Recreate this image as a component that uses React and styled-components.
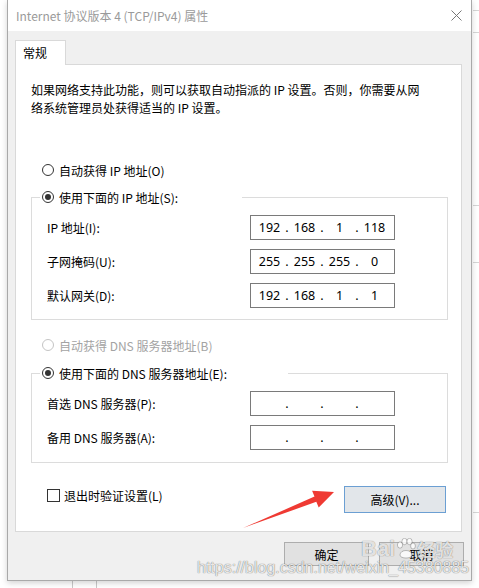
import React from 'react';
import styled, {createGlobalStyle} from 'styled-components';

const GlobalStyle = createGlobalStyle`
  html, body {
    margin: 0;
    padding: 0;
  }
  body {
    font-family: "Noto Sans CJK SC", "Noto Sans", sans-serif;
    font-size: 12px;
    color: #000;
  }
`;

const Desktop = styled.div`
  position: relative;
  width: 479px;
  height: 588px;
  overflow: hidden;
  background-color: #fff;
  background-image:
    linear-gradient(#c9c9c9, #c9c9c9),
    linear-gradient(#c9c9c9, #c9c9c9),
    linear-gradient(#d6d6d6, #d6d6d6),
    linear-gradient(#d6d6d6, #d6d6d6),
    linear-gradient(#d6d6d6, #d6d6d6),
    linear-gradient(#d6d6d6, #d6d6d6),
    linear-gradient(#d6d6d6, #d6d6d6);
  background-repeat: no-repeat;
  background-size: 1px 8px, 1px 8px, 7px 1px, 7px 1px, 7px 1px, 7px 1px, 7px 1px;
  background-position: 72px 581px, 96px 581px, 473px 10px, 473px 32px, 473px 205px, 473px 262px, 473px 512px;
`;

const Window = styled.div`
  box-sizing: border-box;
  width: 465px;
  height: 581px;
  margin-left: 7px;
  background: #f0f0f0;
  border: 1px solid #a9a9a9;
  border-top: none;
  box-shadow: 0 2px 6px rgba(0, 0, 0, 0.18);
  display: flex;
  flex-direction: column;
`;

const TitleBar = styled.div`
  height: 31px;
  background: #fff;
  display: flex;
  align-items: center;
  padding: 0 9px 0 8px;
`;

const Title = styled.span`
  color: #9a9a9a;
  font-size: 12px;
`;

const Close = styled.svg`
  margin-left: auto;
  width: 11px;
  height: 11px;
`;

const Body = styled.div`
  flex: 1;
  padding: 9px 7px 0 7px;
  display: flex;
  flex-direction: column;
`;

const Tab = styled.div`
  box-sizing: border-box;
  width: 51px;
  height: 25px;
  padding-left: 7px;
  line-height: 23px;
  background: #fff;
  border: 1px solid #d9d9d9;
  border-bottom: none;
  margin-bottom: -1px;
  position: relative;
  z-index: 1;
`;

const Panel = styled.div`
  box-sizing: border-box;
  width: 447px;
  height: 468px;
  background: #fff;
  border: 1px solid #d9d9d9;
  padding: 16px 13px 0 15px;
`;

const Intro = styled.p`
  margin: 0;
  line-height: 18px;
`;

const RadioRow = styled.label`
  display: flex;
  align-items: center;
  height: 18px;
  gap: 5px;
  padding-left: ${p => p.$indent}px;
  margin-top: ${p => p.$top || 0}px;
  color: ${p => (p.$disabled ? '#a3a3a3' : '#000')};
`;

const Circle = styled.span`
  box-sizing: border-box;
  width: 12px;
  height: 12px;
  border-radius: 50%;
  border: 1px solid ${p => (p.$disabled ? '#c4c4c4' : '#333')};
  background: #fff;
  display: flex;
  align-items: center;
  justify-content: center;
  &::after {
    content: '';
    display: ${p => (p.$checked ? 'block' : 'none')};
    width: 6px;
    height: 6px;
    border-radius: 50%;
    background: #333;
  }
`;

const Group = styled.fieldset`
  box-sizing: border-box;
  width: 417px;
  margin: ${p => p.$top}px 0 0 0;
  padding: 0;
  min-width: 0;
  border: 1px solid #dcdcdc;
`;

const Legend = styled.legend`
  padding: 0;
  margin-left: 8px;
  width: ${p => p.$width}px;
`;

const Fields = styled.div`
  display: grid;
  grid-template-columns: 203px 145px;
  row-gap: 9px;
  align-items: center;
  padding: 9px 0 ${p => p.$bottom}px 15px;
`;

const IpBox = styled.div`
  box-sizing: border-box;
  height: 25px;
  border: 1px solid #7a7a7a;
  background: #fff;
  display: flex;
  align-items: center;
  padding-left: 3px;
  font-family: "Noto Sans", sans-serif;
  font-size: 12.5px;
`;

const Octet = styled.span`
  width: 31px;
  text-align: center;
`;

const Dot = styled.span`
  width: 4px;
  text-align: center;
`;

const BottomRow = styled.div`
  display: flex;
  justify-content: space-between;
  align-items: flex-start;
  margin-top: 23px;
  padding: 0 2px 0 16px;
`;

const Check = styled.label`
  display: flex;
  align-items: center;
  height: 18px;
  gap: 4px;
`;

const Box = styled.span`
  box-sizing: border-box;
  width: 13px;
  height: 13px;
  border: 1px solid #333;
  background: #fff;
`;

const Button = styled.button`
  box-sizing: border-box;
  width: ${p => p.$w}px;
  height: ${p => p.$h}px;
  font-family: "Noto Sans CJK SC", "Noto Sans", sans-serif;
  font-size: 12px;
  color: #000;
  padding: 0;
  background: ${p => (p.$focus ? '#e2e6ea' : '#e1e1e1')};
  border: 1px solid ${p => (p.$focus ? '#6b9fd3' : '#adadad')};
`;

const Footer = styled.div`
  display: flex;
  justify-content: flex-end;
  gap: 10px;
  padding-top: 10px;
  padding-right: 0;
`;

const Arrow = styled.svg`
  position: absolute;
  left: 0;
  top: 0;
  width: 479px;
  height: 588px;
  pointer-events: none;
`;

const Watermark = styled.div`
  position: absolute;
  left: 197px;
  top: 558px;
  font-family: "Liberation Sans", Arial, sans-serif;
  font-size: 16px;
  line-height: 20px;
  color: rgba(255, 255, 255, 0.85);
  text-shadow: 0 0 1px rgba(0, 0, 0, 0.45), 0 0 1px rgba(0, 0, 0, 0.3);
  white-space: nowrap;
`;

const BaiduMark = styled.div`
  position: absolute;
  left: 361px;
  top: 536px;
  display: flex;
  align-items: center;
  gap: 1px;
  font-family: "Liberation Sans", Arial, sans-serif;
  font-weight: bold;
  font-size: 22px;
  color: rgba(255, 255, 255, 0.8);
  text-shadow: 0 0 1px rgba(0, 0, 0, 0.35), 0 0 1px rgba(0, 0, 0, 0.25);
`;

const BaiduCn = styled.span`
  font-family: "Noto Sans CJK SC", sans-serif;
  font-size: 18px;
`;

function Radio({label, checked, disabled, indent, top}) {
  return (
    <RadioRow $indent={indent} $top={top} $disabled={disabled}>
      <Circle $checked={checked} $disabled={disabled} />
      {label}
    </RadioRow>
  );
}

function IpField({parts}) {
  return (
    <IpBox>
      <Octet>{parts[0]}</Octet>
      <Dot>.</Dot>
      <Octet>{parts[1]}</Octet>
      <Dot>.</Dot>
      <Octet>{parts[2]}</Octet>
      <Dot>.</Dot>
      <Octet>{parts[3]}</Octet>
    </IpBox>
  );
}

const ipRows = [
  {label: 'IP 地址(I):', parts: ['192', '168', '1', '118']},
  {label: '子网掩码(U):', parts: ['255', '255', '255', '0']},
  {label: '默认网关(D):', parts: ['192', '168', '1', '1']},
];

const dnsRows = [
  {label: '首选 DNS 服务器(P):', parts: ['', '', '', '']},
  {label: '备用 DNS 服务器(A):', parts: ['', '', '', '']},
];

export default function App() {
  return (
    <Desktop>
      <GlobalStyle />
      <Window>
        <TitleBar>
          <Title>Internet 协议版本 4 (TCP/IPv4) 属性</Title>
          <Close viewBox="0 0 11 11">
            <path d="M0.5 0.5 L10.5 10.5 M10.5 0.5 L0.5 10.5" stroke="#777" strokeWidth="1" fill="none" />
          </Close>
        </TitleBar>
        <Body>
          <Tab>常规</Tab>
          <Panel>
            <Intro>
              如果网络支持此功能，则可以获取自动指派的 IP 设置。否则，你需要从网
              <br />
              络系统管理员处获得适当的 IP 设置。
            </Intro>

            <Radio label="自动获得 IP 地址(O)" indent={11} top={44} />
            <Group $top={9}>
              <Legend $width={202}>
                <Radio label="使用下面的 IP 地址(S):" checked indent={2} />
              </Legend>
              <Fields $bottom={11}>
                {ipRows.map(row => (
                  <React.Fragment key={row.label}>
                    <span>{row.label}</span>
                    <IpField parts={row.parts} />
                  </React.Fragment>
                ))}
              </Fields>
            </Group>

            <Radio label="自动获得 DNS 服务器地址(B)" disabled indent={11} top={16} />
            <Group $top={10}>
              <Legend $width={248}>
                <Radio label="使用下面的 DNS 服务器地址(E):" checked indent={2} />
              </Legend>
              <Fields $bottom={12}>
                {dnsRows.map(row => (
                  <React.Fragment key={row.label}>
                    <span>{row.label}</span>
                    <IpField parts={row.parts} />
                  </React.Fragment>
                ))}
              </Fields>
            </Group>

            <BottomRow>
              <Check>
                <Box />
                退出时验证设置(L)
              </Check>
              <Button $w={102} $h={27} $focus>高级(V)...</Button>
            </BottomRow>
          </Panel>
          <Footer>
            <Button $w={85} $h={24}>确定</Button>
            <Button $w={85} $h={24}>取消</Button>
          </Footer>
        </Body>
      </Window>

      <Arrow viewBox="0 0 479 588">
        <polygon
          points="243,528 314.5,496.6 312.1,490.8 334,492 318.7,507.6 316.3,501.8"
          fill="#ef3a33"
        />
      </Arrow>
      <BaiduMark>
        Bai
        <svg width="20" height="22" viewBox="0 0 20 22">
          <g fill="rgba(255,255,255,0.8)" stroke="rgba(0,0,0,0.3)" strokeWidth="0.8">
            <ellipse cx="4" cy="7" rx="2.6" ry="3.2" />
            <ellipse cx="8.5" cy="3.5" rx="2.6" ry="3.2" />
            <ellipse cx="13.5" cy="3.5" rx="2.6" ry="3.2" />
            <ellipse cx="17" cy="8" rx="2.4" ry="3" />
            <path d="M4 17 C4 11 16 11 16 17 C16 21 4 21 4 17 Z" />
          </g>
        </svg>
        <BaiduCn>经验</BaiduCn>
      </BaiduMark>
      <Watermark>https://blog.csdn.net/weixin_45380885</Watermark>
    </Desktop>
  );
}
